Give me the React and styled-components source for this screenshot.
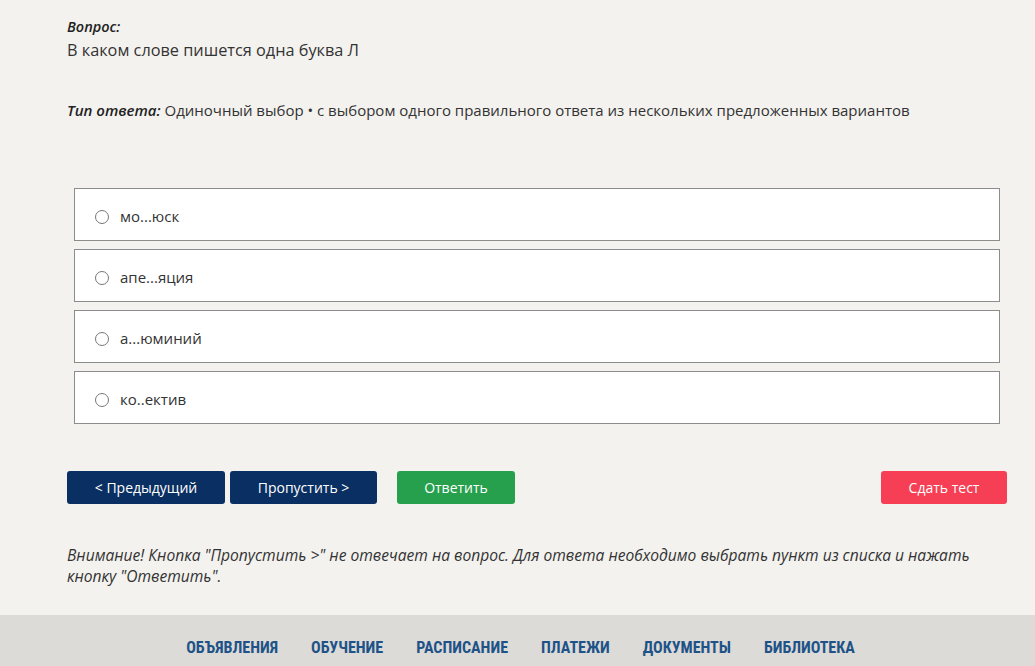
import React, { useState } from "react";
import styled, { createGlobalStyle } from "styled-components";

const GlobalStyle = createGlobalStyle`
  html, body {
    margin: 0;
    padding: 0;
    background: #f3f2ef;
  }
  body {
    font-family: "Open Sans", "Noto Sans", sans-serif;
    color: #333;
  }
`;

const Page = styled.div`
  width: 1035px;
  height: 666px;
  overflow: hidden;
  display: flex;
  flex-direction: column;
  background: #f3f2ef;
`;

const Main = styled.main`
  padding: 16px 28px 0 67px;
  height: 615px;
  flex-shrink: 0;
  box-sizing: border-box;
`;

const Label = styled.div`
  font-size: 14.5px;
  font-weight: 600;
  font-style: italic;
  line-height: 21px;
  color: #222;
`;

const QuestionText = styled.div`
  font-size: 16.3px;
  line-height: 24px;
  margin-top: 1px;
  color: #333;
`;

const AnswerType = styled.div`
  margin-top: 37px;
  font-size: 15px;
  line-height: 22px;
  color: #333;

  b {
    font-weight: 600;
    font-style: italic;
    color: #222;
  }
`;

const Options = styled.div`
  margin: 67px 0 0 7px;
  width: 926px;
  display: flex;
  flex-direction: column;
  gap: 8px;
`;

const Option = styled.label`
  height: 53px;
  box-sizing: border-box;
  border: 1px solid #8c8c8c;
  background: #fff;
  display: flex;
  align-items: center;
  padding: 2px 0 0 20px;
  font-size: 15px;
  color: #333;
  cursor: pointer;
`;

const Radio = styled.span`
  width: 12px;
  height: 12px;
  border-radius: 50%;
  border: 1px solid ${(p) => (p.$checked ? "#0a2f62" : "#777")};
  box-shadow: ${(p) => (p.$checked ? "inset 0 0 0 3px #fff" : "none")};
  background: ${(p) => (p.$checked ? "#0a2f62" : "#fff")};
  margin: 2px 11px 0 0;
  flex-shrink: 0;
`;

const Actions = styled.div`
  margin-top: 47px;
  display: flex;
  align-items: center;
  width: 940px;
`;

const Button = styled.button`
  height: 33px;
  width: ${(p) => p.$w}px;
  margin-right: ${(p) => p.$mr || 0}px;
  margin-left: ${(p) => (p.$push ? "auto" : "0")};
  border: none;
  border-radius: 3px;
  background: ${(p) => p.$bg};
  color: #fff;
  font-family: "Open Sans", "Noto Sans", sans-serif;
  font-size: 14px;
  cursor: pointer;
`;

const Notice = styled.p`
  margin: 41px 0 0;
  font-size: 15.6px;
  line-height: 21px;
  font-style: italic;
  color: #333;
  width: 925px;
`;

const Footer = styled.footer`
  flex: 1;
  background: #dcdbd7;
  display: flex;
  justify-content: center;
  padding-top: 23px;
  padding-left: 6px;
  box-sizing: border-box;
`;

const Nav = styled.nav`
  display: flex;
  gap: 33px;
`;

const NavLink = styled.a`
  font-family: "Liberation Sans Narrow", "Roboto Condensed", "Roboto", sans-serif;
  font-weight: 700;
  font-size: 16px;
  line-height: 20px;
  color: #1f5388;
  text-decoration: none;
`;

const answers = ["мо...юск", "апе...яция", "а...юминий", "ко..ектив"];
const links = ["ОБЪЯВЛЕНИЯ", "ОБУЧЕНИЕ", "РАСПИСАНИЕ", "ПЛАТЕЖИ", "ДОКУМЕНТЫ", "БИБЛИОТЕКА"];

export default function App() {
  const [selected, setSelected] = useState(null);
  return (
    <Page>
      <GlobalStyle />
      <Main>
        <Label>Вопрос:</Label>
        <QuestionText>В каком слове пишется одна буква Л</QuestionText>
        <AnswerType>
          <b>Тип ответа:</b> Одиночный выбор • с выбором одного правильного ответа из нескольких предложенных вариантов
        </AnswerType>
        <Options>
          {answers.map((a, i) => (
            <Option key={a} onClick={() => setSelected(i)}>
              <Radio $checked={selected === i} />
              {a}
            </Option>
          ))}
        </Options>
        <Actions>
          <Button $w={158} $mr={5} $bg="#0a2f62">&lt; Предыдущий</Button>
          <Button $w={147} $mr={20} $bg="#0a2f62">Пропустить &gt;</Button>
          <Button $w={118} $bg="#27a04e">Ответить</Button>
          <Button $w={126} $push $bg="#f63e54">Сдать тест</Button>
        </Actions>
        <Notice>
          Внимание! Кнопка "Пропустить &gt;" не отвечает на вопрос. Для ответа необходимо выбрать пункт из списка и нажать кнопку "Ответить".
        </Notice>
      </Main>
      <Footer>
        <Nav>
          {links.map((l) => (
            <NavLink key={l} href="#">{l}</NavLink>
          ))}
        </Nav>
      </Footer>
    </Page>
  );
}
